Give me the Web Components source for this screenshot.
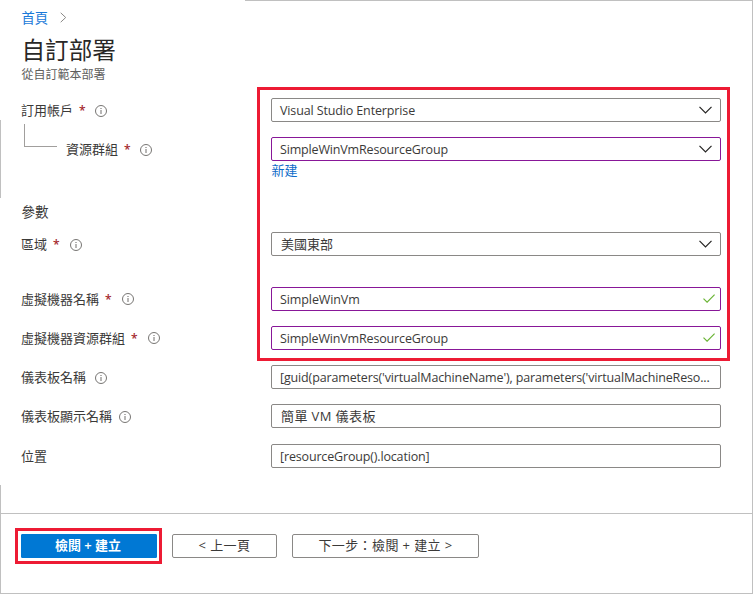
<!DOCTYPE html>
<html lang="zh-Hant">
<head>
<meta charset="utf-8">
<title>自訂部署</title>
<style>
html,body{margin:0;padding:0;background:#fff}
body{width:753px;height:594px;overflow:hidden;font-family:"Open Sans","Noto Sans CJK TC",sans-serif;font-size:13px;color:#3b3a39}
</style>
</head>
<body>
<deploy-page>
  <page-heading slot="head" home="首頁" title-text="自訂部署" sub="從自訂範本部署"></page-heading>
  <form-row label="訂用帳戶" required info><field-box icon="chevron" style="--ls:-.13px">Visual Studio Enterprise</field-box></form-row>
  <form-row label="資源群組" required info nested style="--gap:15px"><field-box icon="chevron" edited>SimpleWinVmResourceGroup</field-box></form-row>
  <new-link>新建</new-link>
  <section-label>參數</section-label>
  <form-row label="區域" required info style="--gap:9px;--req-gap:11px"><field-box cjk icon="chevron">美國東部</field-box></form-row>
  <form-row label="虛擬機器名稱" required info style="--gap:31px;--req-gap:11px;--icon-y:0px"><field-box icon="check" edited style="--ls:-.1px">SimpleWinVm</field-box></form-row>
  <form-row label="虛擬機器資源群組" required info style="--gap:15px;--req-gap:11px;--icon-y:0px"><field-box icon="check" edited>SimpleWinVmResourceGroup</field-box></form-row>
  <form-row label="儀表板名稱" info style="--gap:15px;--info-gap:9px"><field-box style="--ls:-.145px">[guid(parameters('virtualMachineName'), parameters('virtualMachineReso...</field-box></form-row>
  <form-row label="儀表板顯示名稱" info style="--gap:15px;--info-gap:7px"><field-box cjk style="--ls:.4px">簡單 VM 儀表板</field-box></form-row>
  <form-row label="位置" style="--gap:16px"><field-box>[resourceGroup().location]</field-box></form-row>
  <action-button slot="actions" primary style="--w:136px">檢閱 + 建立</action-button>
  <action-button slot="actions" style="--w:105px;--ls:.4px;margin-left:15px">&lt; 上一頁</action-button>
  <action-button slot="actions" style="--w:187px;--ls:.4px;margin-left:15px">下一步：檢閱 + 建立 &gt;</action-button>
</deploy-page>
<script>
const define = (name, render) => customElements.define(name, class extends HTMLElement {
  constructor() { super(); this.attachShadow({ mode: 'open' }); }
  connectedCallback() { this.shadowRoot.innerHTML = render(this); }
});

define('info-icon', () => `
<style>:host{display:block;width:12px;height:12px}svg{display:block}</style>
<svg width="12" height="12" viewBox="0 0 12 12"><circle cx="6" cy="6" r="5.5" fill="none" stroke="#706e6c" stroke-width=".95"/><path d="M6 5v4" stroke="#706e6c" stroke-width="1"/><path d="M6 2.9v1.2" stroke="#706e6c" stroke-width="1.1"/></svg>`);

define('page-heading', el => `
<style>
:host{display:flex;flex-direction:column;height:98px;padding-left:21.5px;box-sizing:border-box;white-space:nowrap}
nav{display:flex;align-items:center;height:20px;padding-top:7px;gap:11px;color:#1a7ad9;font-size:13.3px}
h1{margin:8px 0 0;font-size:23.6px;line-height:30px;font-weight:400;color:#292827;height:30px}
p{margin:1px 0 0;font-size:12px;line-height:18px;color:#605e5c}
nav svg{margin-left:1px}
</style>
<nav><span>${el.getAttribute('home')}</span><svg width="7" height="11" viewBox="0 0 7 11"><path d="M.7.8 5.7 5.5.7 10.2" fill="none" stroke="#8a8886"/></svg></nav>
<h1>${el.getAttribute('title-text')}</h1><p>${el.getAttribute('sub')}</p>`);

define('form-row', el => `
<style>
:host{display:grid;grid-template-columns:250px 450px;height:24px;margin:var(--gap,0) 0 0 21px}
.label{display:flex;align-items:center;height:24px;white-space:nowrap}
.text,.req{position:relative;top:-1px}
.req{top:0;color:#a4262c;width:6px;margin-left:6px;font-size:12px;font-weight:600}
info-icon{margin:var(--icon-y,2px) 0 0 var(--info-gap,8px)}
.req + info-icon{margin-left:var(--req-gap,10px)}
.branch{box-sizing:border-box;width:33px;height:23px;margin:-13px 9px 0 3px;border:solid #a19f9d;border-width:0 0 1px 1px;align-self:flex-start}
</style>
<div class="label">${el.hasAttribute('nested') ? '<span class="branch"></span>' : ''}<span class="text">${el.getAttribute('label')}</span>${el.hasAttribute('required') ? '<span class="req">*</span>' : ''}${el.hasAttribute('info') ? '<info-icon></info-icon>' : ''}</div>
<slot></slot>`);

const glyphs = {
  chevron: '<svg style="margin-right:8px" width="13" height="8" viewBox="0 0 13 8"><path d="M.5.8 6.5 6.9 12.5.8" fill="none" stroke="#252423" stroke-width="1.2"/></svg>',
  check: '<svg style="margin:0 5px 1px 0" width="12" height="9" viewBox="0 0 12 9"><path d="M.5 4.6 4.1 8.2 11.6.6" fill="none" stroke="#6bb536" stroke-width="1.2"/></svg>'
};
define('field-box', el => `
<style>
:host{box-sizing:border-box;display:flex;align-items:center;justify-content:space-between;width:450px;height:24px;border:1px solid #8a8886;border-radius:2px;padding-left:8px;white-space:nowrap;background:#fff;font-size:12.5px;letter-spacing:var(--ls,-.16px)}
:host([edited]){border-color:#881798}
:host([cjk]){font-size:13px;letter-spacing:var(--ls,0);padding-left:9px}
:host([cjk]) span{padding-bottom:1px}
svg{flex:none}
</style>
<span><slot></slot></span>${glyphs[el.getAttribute('icon')] || ''}`);

define('new-link', () => `
<style>:host{display:block;margin:0 0 0 271.5px;height:19px;line-height:18px;color:#0f6cc9}</style><slot></slot>`);

define('section-label', () => `
<style>:host{display:block;margin:22px 0 0 21.5px;height:21px;line-height:21px;font-size:13.5px}</style><slot></slot>`);

define('action-button', () => `
<style>
:host{box-sizing:border-box;position:relative;display:flex;align-items:center;justify-content:center;width:var(--w);height:24px;border:1px solid #8a8886;border-radius:2px;padding-bottom:3px;letter-spacing:var(--ls,0);white-space:nowrap;background:#fff}
:host([primary]){background:#0078d4;border-color:#0078d4;color:#fff;font-weight:600;border-radius:1px;padding-right:2px}
:host([primary])::after{content:"";position:absolute;inset:-7px -6px -7px -7px;border:3px solid #ed1b34}
</style><slot></slot>`);

define('deploy-page', () => `
<style>
:host{position:relative;display:flex;flex-direction:column;width:753px;height:594px;box-sizing:border-box}
main{height:415px}
footer{box-sizing:border-box;height:81px;border-top:1px solid #c0c0c0;display:flex;padding:20px 0 0 21px}
.edge{position:absolute;background:#c0c0c0}
.mark{position:absolute;box-sizing:border-box;left:257px;top:87px;width:473px;height:274px;border:3px solid #ed1b34;pointer-events:none}
</style>
<slot name="head"></slot>
<main><slot></slot></main>
<footer><slot name="actions"></slot></footer>
<div class="mark"></div>
<i class="edge" style="left:245px;right:0;top:0;height:1px"></i>
<i class="edge" style="right:0;top:0;bottom:0;width:1px"></i>
<i class="edge" style="left:0;right:0;bottom:0;height:1px"></i>
<i class="edge" style="left:0;top:120px;height:78px;width:1px"></i>
<i class="edge" style="left:0;top:485px;bottom:0;width:1px"></i>`);
</script>
</body>
</html>
